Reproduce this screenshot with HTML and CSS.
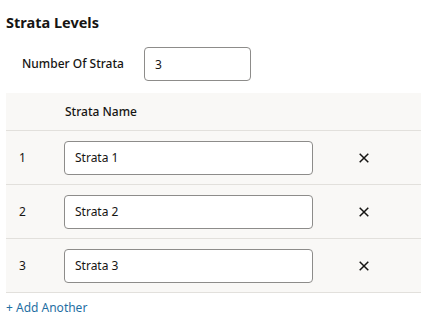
FILE: index.html
```html
<!DOCTYPE html>
<html>
<head>
<meta charset="utf-8">
<link rel="stylesheet" href="styles.css">
</head>
<body>
<div class="page">
  <h2 class="title">Strata Levels</h2>
  <div class="count">
    <label class="count-label">Number Of Strata</label>
    <input class="field count-field" type="text" value="3">
  </div>
  <div class="table">
    <div class="row head">
      <div class="cell num"></div>
      <div class="cell name">Strata Name</div>
      <div class="cell act"></div>
    </div>
    <div class="row">
      <div class="cell num">1</div>
      <div class="cell name"><input class="field name-field" type="text" value="Strata 1"></div>
      <div class="cell act"><svg class="x" width="10" height="10" viewBox="0 0 10 10"><path d="M0.7 0.7L9.3 9.3M9.3 0.7L0.7 9.3" stroke="#161513" stroke-width="1.5" fill="none"/></svg></div>
    </div>
    <div class="row">
      <div class="cell num">2</div>
      <div class="cell name"><input class="field name-field" type="text" value="Strata 2"></div>
      <div class="cell act"><svg class="x" width="10" height="10" viewBox="0 0 10 10"><path d="M0.7 0.7L9.3 9.3M9.3 0.7L0.7 9.3" stroke="#161513" stroke-width="1.5" fill="none"/></svg></div>
    </div>
    <div class="row">
      <div class="cell num">3</div>
      <div class="cell name"><input class="field name-field" type="text" value="Strata 3"></div>
      <div class="cell act"><svg class="x" width="10" height="10" viewBox="0 0 10 10"><path d="M0.7 0.7L9.3 9.3M9.3 0.7L0.7 9.3" stroke="#161513" stroke-width="1.5" fill="none"/></svg></div>
    </div>
  </div>
  <a class="add" href="#">+ Add Another</a>
</div>
</body>
</html>
```

FILE: styles.css
```css
* { box-sizing: border-box; }
html, body { margin: 0; background: #ffffff; }
body {
  font-family: "Noto Sans", "Liberation Sans", sans-serif;
  font-size: 12px;
  color: #161513;
}
.page { padding: 14px 5px 0 6px; }
.title {
  margin: 0;
  font-size: 14.5px;
  line-height: 16px;
  font-weight: 700;
}
.count {
  display: flex;
  align-items: center;
  margin-top: 17px;
  padding-left: 16px;
}
.count-label {
  width: 122px;
  font-weight: 500;
  line-height: 16px;
}
.field {
  height: 34px;
  border: 1px solid #8d8c8a;
  border-radius: 4px;
  background: #fff;
  font-family: inherit;
  font-size: 12px;
  color: #161513;
  padding: 0 10px;
  outline: none;
}
.count-field { width: 107px; }
.table {
  margin-top: 12px;
  background: #f9f8f6;
}
.row {
  display: grid;
  grid-template-columns: 58px 249px 102px 1fr;
  align-items: center;
  height: 54px;
  border-bottom: 1px solid #e2e0dc;
}
.row.head { height: 38px; }
.cell { display: flex; align-items: center; }
.num { padding-left: 13px; }
.head .name { font-weight: 500; padding-left: 1px; }
.act { justify-content: center; }
.name-field { width: 249px; }
.x { display: block; }
.add {
  display: inline-block;
  margin-top: 7px;
  color: #1f6fa3;
  text-decoration: none;
  line-height: 16px;
}
```
